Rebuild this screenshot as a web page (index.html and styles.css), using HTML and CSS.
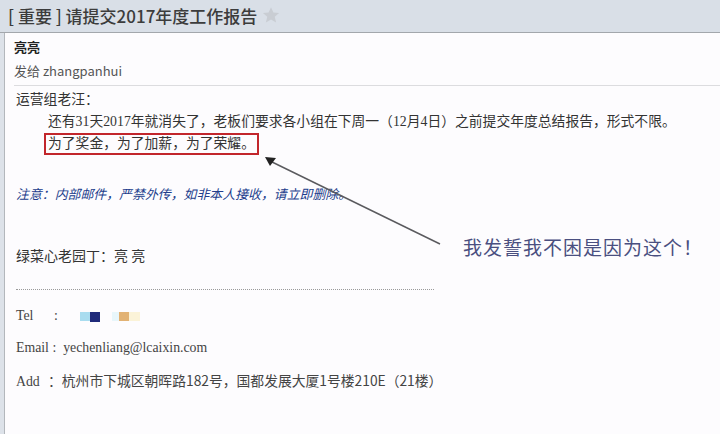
FILE: index.html
```html
<!DOCTYPE html>
<html lang="zh-CN">
<head>
    <meta charset="UTF-8">
    <title>请提交2017年度工作报告</title>
    <link rel="stylesheet" href="styles.css">
</head>
<body>
    <div class="titlebar">
        <h1>[ 重要 ] 请提交2017年度工作报告</h1>
        <svg class="star" width="18" height="18" viewBox="0 0 24 24"><path d="M12 1.5l3.2 7.1 7.6.7-5.8 5.1 1.8 7.6L12 18l-6.8 4 1.8-7.6-5.8-5.1 7.6-.7z" fill="#c9cdd3"/></svg>
    </div>

    <div class="mail">
        <div class="head">
            <div class="sender">亮亮</div>
            <div class="to">发给 zhangpanhui</div>
        </div>

        <div class="content">
            <p class="line">运营组老汪：</p>
            <p class="line indent">还有31天2017年就消失了，老板们要求各小组在下周一（12月4日）之前提交年度总结报告，形式不限。</p>
            <p class="line indent"><span class="mark">为了奖金，为了加薪，为了荣耀。</span></p>

            <p class="notice">注意：内部邮件，严禁外传，如非本人接收，请立即删除。</p>

            <p class="sign">绿菜心老园丁：亮 亮</p>
            <div class="dots"></div>

            <p class="info"><span class="label tel">Tel</span>:<span class="blur">
                <i class="px c1"></i><i class="px c2"></i><i class="gap"></i><i class="px c3"></i><i class="px c4"></i><i class="px c5"></i></span></p>
            <p class="info">Email :&nbsp; yechenliang@lcaixin.com</p>
            <p class="info"><span class="label add">Add</span><span class="cn">：杭州市下城区朝晖路182号，国都发展大厦1号楼210E（21楼）</span></p>
        </div>

        <!-- annotation drawn over the mail -->
        <svg class="arrow" width="720" height="434" viewBox="0 0 720 434">
            <line x1="440" y1="244" x2="270" y2="161" stroke="#5a5a5e" stroke-width="1.4"/>
            <polygon points="265,157 276,158 270,166" fill="#222"/>
        </svg>
        <p class="note">我发誓我不困是因为这个！</p>
    </div>
</body>
</html>
```

FILE: styles.css
```css
html, body {
    margin: 0;
    height: 100%;
    overflow: hidden;
}
body {
    background: #dde2e9;
    font-family: "Noto Sans CJK SC", sans-serif;
    color: #333;
}
.titlebar {
    height: 32px;
    display: flex;
    align-items: center;
    padding-left: 8px;
    border-bottom: 1px solid #a3a7ac;
    background: #d9dfe7;
}
.titlebar h1 {
    margin: 0;
    font-size: 17px;
    font-weight: 500;
    color: #3c3c3c;
    line-height: 28px;
}
.star {
    margin-left: 5px;
    margin-top: -2px;
}
.mail {
    position: relative;
    margin-left: 4px;
    height: calc(100% - 33px);
    border-left: 1px solid #b3b7bc;
    background: #fdfcfe;
}
.head {
    margin-left: 9px;
    padding: 2px 0 2px;
    border-bottom: 1px solid #dcdcdf;
    font-size: 13px;
    line-height: 24px;
}
.sender {
    font-weight: bold;
    color: #222;
}
.to {
    color: #555;
}
.content {
    padding: 3px 0 0 11px;
    font-family: "Liberation Serif", "Noto Sans CJK SC", serif;
    font-size: 13.8px;
    color: #333;
}
.content p {
    margin: 0;
}
.line {
    line-height: 22px;
    white-space: nowrap;
}
.indent {
    padding-left: 32px;
}
.mark {
    display: inline-block;
    margin-left: -4px;
    padding: 0 2px 0 2px;
    line-height: 18px;
    border: 2px solid #c2262c;
    vertical-align: top;
}
.notice {
    margin-top: 29px !important;
    font-family: "Noto Sans CJK SC", sans-serif;
    font-size: 12.9px;
    font-style: italic;
    color: #223d8c;
    line-height: 20px;
}
.sign {
    margin-top: 40px !important;
    font-family: "Noto Sans CJK SC", sans-serif;
    font-size: 14px;
    line-height: 22px;
}
.dots {
    width: 418px;
    margin-top: 23px;
    border-top: 1px dotted #9a9a9a;
}
.dots + .info {
    margin-top: 10px !important;
}
.info {
    line-height: 32px;
    color: #444;
    white-space: nowrap;
}
.label {
    display: inline-block;
}
.label.tel {
    width: 38px;
}
.label.add {
    width: 32px;
}
.blur {
    display: inline-block;
    margin-left: 22px;
    vertical-align: middle;
    height: 10px;
}
.px {
    display: inline-block;
    width: 10px;
    height: 9px;
    vertical-align: top;
}
.gap { display: inline-block; width: 12px; }
.c1 { background: #a9dcef; }
.c2 { background: #1f2a7a; height: 10px; }
.c3 { background: #e8f6fb; width: 7px; }
.c4 { background: #e2b274; }
.c5 { background: #fbf3d8; width: 11px; }
.cn {
    font-family: "Noto Sans CJK SC", sans-serif;
    font-size: 13.8px;
}
.arrow {
    position: absolute;
    left: -5px;
    top: -33px;
    pointer-events: none;
}
.note {
    position: absolute;
    left: 458px;
    top: 200px;
    margin: 0;
    font-family: "Noto Sans CJK SC", serif;
    font-size: 19px;
    color: #4a4f80;
    letter-spacing: 1px;
}
```
